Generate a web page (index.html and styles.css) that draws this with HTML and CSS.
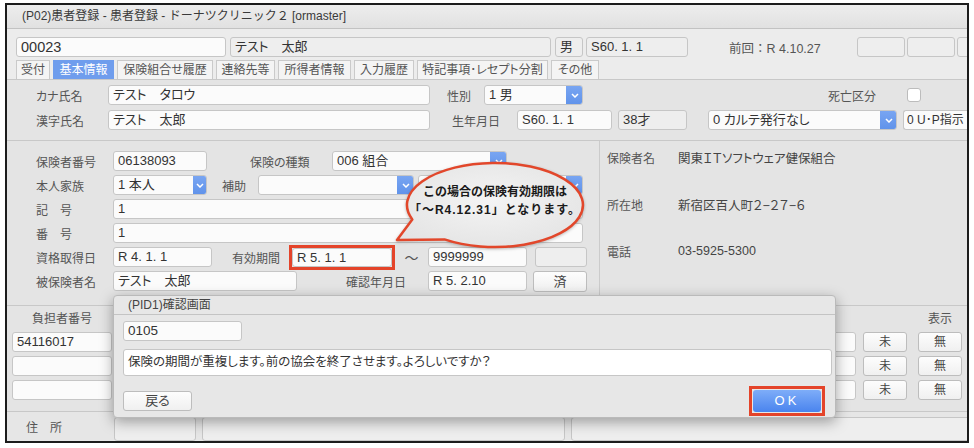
FILE: index.html
```html
<!DOCTYPE html>
<html>
    <head>
        <meta http-equiv="Content-Type" content="text/html; charset=UTF-8">
        <title>(P02)患者登録</title>
        <link rel="stylesheet" href="styles.css">
    </head>
    <body>
        <div class="window">
            <div class="titlebar">(P02)患者登録 - 患者登録 - ドーナツクリニック２ [ormaster]</div>

            <div class="head">
                <div class="row top">
                    <div class="fld f-id">00023</div>
                    <div class="fld off f-name">テスト　太郎</div>
                    <div class="fld off f-sex">男</div>
                    <div class="fld off f-dob">S60. 1. 1</div>
                    <div class="prev">前回：R 4.10.27</div>
                    <div class="fld off slot"></div>
                    <div class="fld off slot"></div>
                    <div class="fld off slot"></div>
                </div>
                <div class="tabs">
                    <div class="tab t1">受付</div>
                    <div class="tab t2 on">基本情報</div>
                    <div class="tab t3">保険組合せ履歴</div>
                    <div class="tab t4">連絡先等</div>
                    <div class="tab t5">所得者情報</div>
                    <div class="tab t6">入力履歴</div>
                    <div class="tab t7">特記事項･レセプト分割</div>
                    <div class="tab t8">その他</div>
                </div>
            </div>

            <div class="p1">
                <div class="row">
                    <div class="lb l-name">カナ氏名</div>
                    <div class="fld w322">テスト　タロウ</div>
                    <div class="lb l-sex">性別</div>
                    <div class="fld sel w99"><span class="txt">1 男</span><span class="arr"><svg width="8" height="5" viewBox="0 0 8 5"><polyline points="1,1 4,4 7,1"/></svg></span></div>
                    <div class="lb l-dead">死亡区分</div>
                    <div class="chk"></div>
                </div>
                <div class="row r2">
                    <div class="lb l-name">漢字氏名</div>
                    <div class="fld w322">テスト　太郎</div>
                    <div class="lb l-birth">生年月日</div>
                    <div class="fld w95">S60. 1. 1</div>
                    <div class="fld off age">38才</div>
                    <div class="fld sel karte"><span class="txt">0 カルテ発行なし</span><span class="arr"><svg width="8" height="5" viewBox="0 0 8 5"><polyline points="1,1 4,4 7,1"/></svg></span></div>
                    <div class="fld up">0 U･P指示</div>
                </div>
            </div>

            <div class="p2">
                <div class="left">
                    <div class="row">
                        <div class="lb l-ins">保険者番号</div>
                        <div class="fld w94">06138093</div>
                        <div class="lb l-kind">保険の種類</div>
                        <div class="fld sel w175"><span class="txt">006 組合</span><span class="arr"><svg width="8" height="5" viewBox="0 0 8 5"><polyline points="1,1 4,4 7,1"/></svg></span></div>
                    </div>
                    <div class="row">
                        <div class="lb l-ins">本人家族</div>
                        <div class="fld sel w94 narrow"><span class="txt">1 本人</span><span class="arr"><svg width="8" height="5" viewBox="0 0 8 5"><polyline points="1,1 4,4 7,1"/></svg></span></div>
                        <div class="lb l-aid">補助</div>
                        <div class="fld sel w156"><span class="txt"></span><span class="arr"><svg width="8" height="5" viewBox="0 0 8 5"><polyline points="1,1 4,4 7,1"/></svg></span></div>
                        <div class="fld sel w165"><span class="txt"></span><span class="arr"><svg width="8" height="5" viewBox="0 0 8 5"><polyline points="1,1 4,4 7,1"/></svg></span></div>
                    </div>
                    <div class="row">
                        <div class="lb l-ins">記　号</div>
                        <div class="fld w470">1</div>
                    </div>
                    <div class="row">
                        <div class="lb l-ins">番　号</div>
                        <div class="fld w470">1</div>
                    </div>
                    <div class="row">
                        <div class="lb l-ins">資格取得日</div>
                        <div class="fld w99">R 4. 1. 1</div>
                        <div class="lb l-valid">有効期間</div>
                        <div class="hl"><div class="fld">R 5. 1. 1</div></div>
                        <div class="tilde">〜</div>
                        <div class="fld w99">9999999</div>
                        <div class="fld off blank">&nbsp;</div>
                    </div>
                    <div class="row">
                        <div class="lb l-ins">被保険者名</div>
                        <div class="fld w184">テスト　太郎</div>
                        <div class="lb l-check">確認年月日</div>
                        <div class="fld w99">R 5. 2.10</div>
                        <div class="btn done">済</div>
                    </div>
                </div>
                <div class="right">
                    <div class="lb">保険者名</div><div class="val">関東ＩＴソフトウェア健保組合</div>
                    <div class="lb">所在地</div><div class="val">新宿区百人町２−２７−６</div>
                    <div class="lb">電話</div><div class="val">03-5925-5300</div>
                </div>
            </div>

            <div class="p3">
                <div class="col c1">
                    <div class="ch">負担者番号</div>
                    <div class="fld">54116017</div>
                    <div class="fld"></div>
                    <div class="fld"></div>
                </div>
                <div class="col c2">
                    <div class="ch">受給者番号</div>
                    <div class="fld"></div>
                    <div class="fld"></div>
                    <div class="fld"></div>
                </div>
                <div class="col c3">
                    <div class="ch"></div>
                    <div class="btn">未</div>
                    <div class="btn">未</div>
                    <div class="btn">未</div>
                </div>
                <div class="col c4">
                    <div class="ch">表示</div>
                    <div class="btn">無</div>
                    <div class="btn">無</div>
                    <div class="btn">無</div>
                </div>
            </div>

            <div class="p4">
                <div class="lb l-addr">住　所</div>
                <div class="fld off a1"></div>
                <div class="fld off a2"></div>
                <div class="fld off a3"></div>
            </div>

            <!-- callout over the insurance block -->
            <div class="bubble">
                <svg width="200" height="100" viewBox="0 0 200 100">
                    <defs>
                        <radialGradient id="bg" cx="50%" cy="45%" r="60%">
                            <stop offset="0" stop-color="#f4f4f4"/>
                            <stop offset="1" stop-color="#e4e4e4"/>
                        </radialGradient>
                    </defs>
                    <path d="M22.3,64.4 L7,85 L54.5,84.4 A88,42 0 1 0 22.3,64.4 Z"/>
                </svg>
                <div class="bubble-text">この場合の保険有効期限は<br><span class="l2">「〜R4.12.31」となります。</span></div>
            </div>

            <!-- confirm dialog -->
            <div class="dlg">
                <div class="dlg-title">(PID1)確認画面</div>
                <div class="dlg-body">
                    <div class="fld code">0105</div>
                    <div class="fld msg">保険の期間が重複します。前の協会を終了させます。よろしいですか？</div>
                    <div class="dlg-btns">
                        <div class="btn back">戻る</div>
                        <div class="hl ok-wrap"><div class="ok">OK</div></div>
                    </div>
                </div>
            </div>
        </div>
    </body>
</html>
```

FILE: styles.css
```css
* {
    box-sizing: border-box;
}
body {
    margin: 0;
    background: #fff;
    font-family: "Liberation Sans", "Noto Sans CJK JP", sans-serif;
    font-feature-settings: "palt";
    color: #333;
}
.window {
    position: relative;
    margin: 3px 0 0 5px;
    width: 964px;
    height: 440px;
    border: 2px solid #1c1c1c;
    overflow: hidden;
    background: #e4e4e4;
}
.titlebar {
    height: 24px;
    padding-left: 15px;
    line-height: 23px;
    font-size: 12px;
    font-feature-settings: normal;
    color: #3a3a3a;
    background: linear-gradient(#ededed, #e1e1e1);
    border-bottom: 1px solid #c2c2c2;
}

/* generic pieces */
.row {
    display: flex;
    align-items: center;
    height: 20px;
}
.fld {
    flex: none;
    height: 20px;
    border: 1px solid #c6c6c6;
    border-radius: 3px;
    background: #fbfbfb;
    font-size: 13px;
    line-height: 18px;
    padding: 0 4px;
    white-space: nowrap;
    overflow: hidden;
    color: #333;
}
.off {
    background: #eeeeee;
}
.lb {
    flex: none;
    font-size: 12px;
    color: #555;
    white-space: nowrap;
}
.sel {
    display: flex;
    padding: 0;
}
.sel .txt {
    flex: 1;
    padding-left: 4px;
    overflow: hidden;
}
.sel .arr {
    flex: none;
    width: 17px;
    margin: -1px -1px -1px 0;
    background: linear-gradient(#7aa6f2, #5f92ea);
    border-radius: 0 3px 3px 0;
    display: flex;
    align-items: center;
    justify-content: center;
}
.sel.narrow .arr {
    width: 14px;
}
.arr svg polyline {
    fill: none;
    stroke: #fff;
    stroke-width: 1.5;
}
.btn {
    flex: none;
    height: 20px;
    border: 1px solid #bdbdbd;
    border-radius: 3px;
    background: linear-gradient(#fdfdfd, #f0f0f0);
    font-size: 12px;
    line-height: 18px;
    text-align: center;
    color: #444;
}
.hl {
    flex: none;
    border: 3px solid #e4442a;
}

/* header: patient line + tabs */
.head {
    height: 51px;
    padding-top: 8px;
    background: #ececec;
    border-bottom: 1px solid #c8c8c8;
}
.top {
    padding-left: 9px;
}
.f-id {
    width: 210px;
    font-size: 14.5px;
}
.f-name {
    width: 321px;
    margin-left: 4px;
}
.f-sex {
    width: 28px;
    margin-left: 4px;
}
.f-dob {
    width: 102px;
    margin-left: 3px;
}
.prev {
    flex: none;
    width: 128px;
    margin-left: 41px;
    font-size: 12.5px;
    font-feature-settings: normal;
    color: #555;
}
.slot {
    width: 48px;
    margin-right: 2px;
}
.tabs {
    display: flex;
    gap: 3px;
    height: 19px;
    margin-top: 3px;
    padding-left: 9px;
}
.tab {
    flex: none;
    height: 19px;
    border: 1px solid #cacaca;
    border-bottom: none;
    background: #f4f4f4;
    font-size: 12px;
    line-height: 18px;
    text-align: center;
    color: #555;
}
.tab.on {
    background: #6f9ded;
    border-color: #6f9ded;
    color: #fff;
}
.t1 { width: 34px; }
.t2 { width: 61px; }
.t3 { width: 96px; }
.t4 { width: 59px; }
.t5 { width: 73px; }
.t6 { width: 60px; }
.t7 { width: 131px; }
.t8 { width: 48px; }

/* names panel */
.p1 {
    height: 61px;
    padding-top: 5px;
    border-bottom: 1px solid #c8c8c8;
}
.p1 .r2 {
    margin-top: 5px;
}
.l-name {
    width: 72px;
    margin-left: 29px;
}
.w322 { width: 322px; }
.l-sex {
    width: 37px;
    margin-left: 17px;
}
.w99 { width: 99px; }
.l-dead {
    width: 79px;
    margin-left: 245px;
}
.chk {
    flex: none;
    width: 14px;
    height: 14px;
    border: 1px solid #bcbcbc;
    border-radius: 3px;
    background: #fff;
}
.l-birth {
    width: 65px;
    margin-left: 22px;
}
.w95 { width: 95px; }
.age {
    width: 69px;
    margin-left: 6px;
}
.karte {
    width: 189px;
    margin-left: 21px;
}
.up {
    width: 64px;
    margin-left: 6px;
    padding: 0 2px 0 3px;
    font-size: 12px;
    border-right: none;
    border-radius: 3px 0 0 3px;
}

/* insurance panel */
.p2 {
    display: flex;
    height: 165px;
    border-bottom: 1px solid #c8c8c8;
}
.p2 .left {
    width: 593px;
    padding-top: 10px;
    border-right: 1px solid #cbcbcb;
    display: flex;
    flex-direction: column;
    gap: 4px;
}
.l-ins {
    width: 77px;
    margin-left: 29px;
}
.w94 { width: 94px; }
.l-kind {
    width: 82px;
    margin-left: 43px;
}
.w175 { width: 175px; }
.l-aid {
    width: 36px;
    margin-left: 15px;
}
.w156 { width: 156px; }
.w165 {
    width: 165px;
    margin-left: 4px;
}
.w470 { width: 470px; }
.l-valid {
    width: 57px;
    margin-left: 20px;
}
.hl .fld {
    width: 100px;
    height: 19px;
    line-height: 17px;
}
.tilde {
    flex: none;
    width: 33px;
    text-align: center;
    font-size: 14px;
    color: #555;
}
.blank {
    width: 52px;
    margin-left: 8px;
}
.w184 { width: 184px; }
.l-check {
    width: 82px;
    margin-left: 49px;
}
.done {
    width: 54px;
    height: 21px;
    margin-left: 6px;
    line-height: 19px;
    font-size: 13px;
}
.p2 .right {
    flex: 1;
    padding: 6px 0 0 7px;
    display: grid;
    grid-template-columns: 71px 1fr;
    grid-auto-rows: 20px;
    row-gap: 27px;
    align-content: start;
    align-items: center;
}
.val {
    font-size: 12.5px;
    color: #444;
}

/* burden numbers */
.p3 {
    display: flex;
    height: 106px;
    padding-top: 4px;
    border-bottom: 1px solid #c8c8c8;
}
.col {
    flex: none;
    display: flex;
    flex-direction: column;
    gap: 4px;
}
.ch {
    height: 18px;
    font-size: 12px;
    line-height: 18px;
    text-align: center;
    color: #555;
}
.c1 {
    width: 100px;
    margin-left: 5px;
}
.c2 {
    width: 740px;
    margin-left: 4px;
}
.c3 {
    width: 44px;
    margin-left: 7px;
}
.c4 {
    width: 44px;
    margin-left: 11px;
}

/* address */
.p4 {
    display: flex;
    padding-top: 5px;
    background: #e6e6e6;
    height: 30px;
}
.l-addr {
    width: 88px;
    margin-left: 19px;
    line-height: 23px;
}
.p4 .fld {
    height: 24px;
}
.a1 { width: 82px; }
.a2 { width: 363px; margin-left: 6px; }
.a3 { width: 400px; margin-left: 6px; }

/* callout */
.bubble {
    position: absolute;
    left: 383px;
    top: 150px;
    width: 200px;
    height: 100px;
}
.bubble svg {
    display: block;
    overflow: visible;
    filter: drop-shadow(0 1px 1.5px rgba(0, 0, 0, .25));
}
.bubble path {
    fill: url(#bg);
    stroke: #e2472b;
    stroke-width: 2.5;
    stroke-linejoin: round;
}
.bubble-text {
    position: absolute;
    left: 7px;
    top: 28px;
    width: 196px;
    text-align: center;
    font-size: 12px;
    font-weight: bold;
    font-feature-settings: normal;
    line-height: 18px;
    color: #1a1a1a;
}
.bubble-text .l2 {
    letter-spacing: 1px;
}

/* dialog */
.dlg {
    position: absolute;
    left: 106px;
    top: 290px;
    width: 723px;
    height: 123px;
    background: #e7e7e7;
    border: 1px solid #bababa;
    border-radius: 4px;
    box-shadow: 0 4px 14px rgba(0, 0, 0, .35);
}
.dlg-title {
    height: 19px;
    padding-left: 14px;
    border-bottom: 1px solid #c4c4c4;
    font-size: 12px;
    line-height: 18px;
    color: #444;
}
.dlg-body {
    padding: 6px 3px 0 9px;
}
.code {
    width: 119px;
    font-size: 13.5px;
}
.msg {
    width: 709px;
    height: 27px;
    margin-top: 8px;
    background: #fff;
    font-size: 12.5px;
    line-height: 25px;
}
.dlg-btns {
    display: flex;
    justify-content: space-between;
    align-items: center;
    height: 30px;
    margin: 10px 7px 0 0;
}
.back {
    width: 69px;
    font-size: 13px;
}
.ok-wrap {
    width: 76px;
    height: 30px;
    padding: 1px;
}
.ok {
    height: 22px;
    border-radius: 3px;
    background: linear-gradient(#7eadf9, #4a84ee);
    color: #fff;
    font-size: 13px;
    letter-spacing: 3px;
    line-height: 22px;
    text-align: center;
}
```
